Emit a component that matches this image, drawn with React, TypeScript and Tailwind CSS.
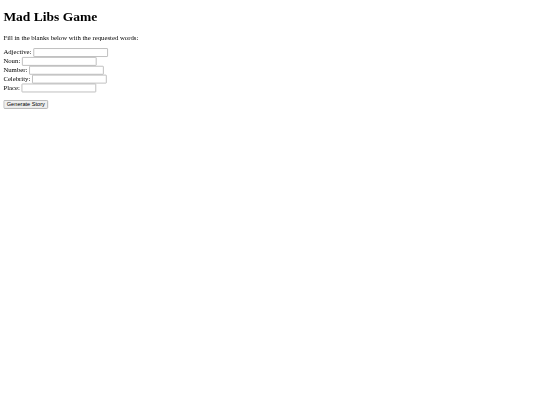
export default function App() {
  const fields = ["Adjective", "Noun", "Number", "Celebrity", "Place"];

  return (
    <div className="w-[540px] h-[405px] overflow-hidden bg-white">
      {/* page drawn at 1280 wide, shrunk to the window */}
      <div className="w-[1280px] h-[960px] origin-top-left scale-[0.421875] px-2 pt-px font-['Liberation_Serif',serif] text-[16px] text-black">
        <h1 className="text-[32px] font-bold leading-[1.15] mt-[20.44px] mb-[21.44px]">Mad Libs Game</h1>

        <p className="my-4 leading-[1.15]">Fill in the blanks below with the requested words:</p>

        <form className="leading-[1.15]">
          {fields.map((f) => (
            <div key={f}>
              <label>{f}: </label>
              <input
                type="text"
                className="w-[177px] h-[21px] px-[2px] py-px border-2 border-[#b4b4b4] rounded-[2px] bg-white font-['Liberation_Sans',sans-serif] text-[13.33px] align-baseline"
              />
            </div>
          ))}
          <div className="h-[18px]" />
          <button
            type="button"
            className="px-[6px] py-px h-[21px] border-2 border-[#a8a8a8] rounded-[3px] bg-[#efefef] font-['Liberation_Sans',sans-serif] text-[13.33px] text-black"
          >
            Generate Story
          </button>
        </form>
      </div>
    </div>
  );
}
